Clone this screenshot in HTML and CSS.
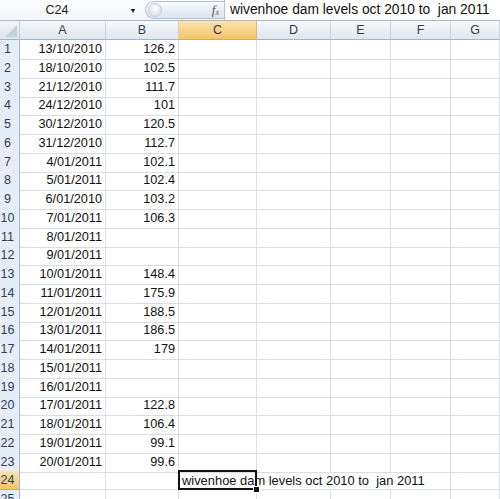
FILE: index.html
```html
<!DOCTYPE html>
<html>
<head>
<meta charset="utf-8">
<link rel="stylesheet" href="styles.css">
</head>
<body>
<div class="sheet">
  <div class="fbar">
    <div class="namebox">C24</div>
    <div class="drop">&#9660;</div>
    <div class="pill"><span class="knob"></span><span class="fx">f<sub>x</sub></span></div>
    <div class="formula">wivenhoe dam levels oct 2010 to&nbsp; jan 2011</div>
  </div>
  <div class="row head">
    <div class="corner"><span class="tri"></span></div>
    <div class="ch">A</div><div class="ch">B</div><div class="ch sel">C</div><div class="ch">D</div><div class="ch">E</div><div class="ch">F</div><div class="ch">G</div>
  </div>
  <div class="row"><div class="rh">1</div><div class="c">13/10/2010</div><div class="c">126.2</div><div class="c"></div><div class="c"></div><div class="c"></div><div class="c"></div><div class="c"></div></div>
  <div class="row"><div class="rh">2</div><div class="c">18/10/2010</div><div class="c">102.5</div><div class="c"></div><div class="c"></div><div class="c"></div><div class="c"></div><div class="c"></div></div>
  <div class="row"><div class="rh">3</div><div class="c">21/12/2010</div><div class="c">111.7</div><div class="c"></div><div class="c"></div><div class="c"></div><div class="c"></div><div class="c"></div></div>
  <div class="row"><div class="rh">4</div><div class="c">24/12/2010</div><div class="c">101</div><div class="c"></div><div class="c"></div><div class="c"></div><div class="c"></div><div class="c"></div></div>
  <div class="row"><div class="rh">5</div><div class="c">30/12/2010</div><div class="c">120.5</div><div class="c"></div><div class="c"></div><div class="c"></div><div class="c"></div><div class="c"></div></div>
  <div class="row"><div class="rh">6</div><div class="c">31/12/2010</div><div class="c">112.7</div><div class="c"></div><div class="c"></div><div class="c"></div><div class="c"></div><div class="c"></div></div>
  <div class="row"><div class="rh">7</div><div class="c">4/01/2011</div><div class="c">102.1</div><div class="c"></div><div class="c"></div><div class="c"></div><div class="c"></div><div class="c"></div></div>
  <div class="row"><div class="rh">8</div><div class="c">5/01/2011</div><div class="c">102.4</div><div class="c"></div><div class="c"></div><div class="c"></div><div class="c"></div><div class="c"></div></div>
  <div class="row"><div class="rh">9</div><div class="c">6/01/2010</div><div class="c">103.2</div><div class="c"></div><div class="c"></div><div class="c"></div><div class="c"></div><div class="c"></div></div>
  <div class="row"><div class="rh">10</div><div class="c">7/01/2011</div><div class="c">106.3</div><div class="c"></div><div class="c"></div><div class="c"></div><div class="c"></div><div class="c"></div></div>
  <div class="row"><div class="rh">11</div><div class="c">8/01/2011</div><div class="c"></div><div class="c"></div><div class="c"></div><div class="c"></div><div class="c"></div><div class="c"></div></div>
  <div class="row"><div class="rh">12</div><div class="c">9/01/2011</div><div class="c"></div><div class="c"></div><div class="c"></div><div class="c"></div><div class="c"></div><div class="c"></div></div>
  <div class="row"><div class="rh">13</div><div class="c">10/01/2011</div><div class="c">148.4</div><div class="c"></div><div class="c"></div><div class="c"></div><div class="c"></div><div class="c"></div></div>
  <div class="row"><div class="rh">14</div><div class="c">11/01/2011</div><div class="c">175.9</div><div class="c"></div><div class="c"></div><div class="c"></div><div class="c"></div><div class="c"></div></div>
  <div class="row"><div class="rh">15</div><div class="c">12/01/2011</div><div class="c">188.5</div><div class="c"></div><div class="c"></div><div class="c"></div><div class="c"></div><div class="c"></div></div>
  <div class="row"><div class="rh">16</div><div class="c">13/01/2011</div><div class="c">186.5</div><div class="c"></div><div class="c"></div><div class="c"></div><div class="c"></div><div class="c"></div></div>
  <div class="row"><div class="rh">17</div><div class="c">14/01/2011</div><div class="c">179</div><div class="c"></div><div class="c"></div><div class="c"></div><div class="c"></div><div class="c"></div></div>
  <div class="row"><div class="rh">18</div><div class="c">15/01/2011</div><div class="c"></div><div class="c"></div><div class="c"></div><div class="c"></div><div class="c"></div><div class="c"></div></div>
  <div class="row"><div class="rh">19</div><div class="c">16/01/2011</div><div class="c"></div><div class="c"></div><div class="c"></div><div class="c"></div><div class="c"></div><div class="c"></div></div>
  <div class="row"><div class="rh">20</div><div class="c">17/01/2011</div><div class="c">122.8</div><div class="c"></div><div class="c"></div><div class="c"></div><div class="c"></div><div class="c"></div></div>
  <div class="row"><div class="rh">21</div><div class="c">18/01/2011</div><div class="c">106.4</div><div class="c"></div><div class="c"></div><div class="c"></div><div class="c"></div><div class="c"></div></div>
  <div class="row"><div class="rh">22</div><div class="c">19/01/2011</div><div class="c">99.1</div><div class="c"></div><div class="c"></div><div class="c"></div><div class="c"></div><div class="c"></div></div>
  <div class="row"><div class="rh">23</div><div class="c">20/01/2011</div><div class="c">99.6</div><div class="c"></div><div class="c"></div><div class="c"></div><div class="c"></div><div class="c"></div></div>
  <div class="row"><div class="rh sel">24</div><div class="c"></div><div class="c nb"></div><div class="c active"><span class="txt">wivenhoe dam levels oct 2010 to&nbsp; jan 2011</span><span class="handle"></span></div><div class="c nr"></div><div class="c nr"></div><div class="c"></div><div class="c"></div></div>
  <div class="row"><div class="rh">25</div><div class="c"></div><div class="c"></div><div class="c"></div><div class="c"></div><div class="c"></div><div class="c"></div><div class="c"></div></div>
</div>
</body>
</html>
```
FILE: styles.css
```css
html, body {
  margin: 0;
  padding: 0;
  background: #ffffff;
}
.sheet {
  width: 500px;
  height: 499px;
  overflow: hidden;
  font-family: "Liberation Sans", Arial, sans-serif;
  font-size: 12.5px;
  color: #111;
}
.fbar {
  height: 20px;
  display: flex;
  align-items: center;
  background: linear-gradient(#fdfdfe, #f2f5f9);
  border-bottom: 1px solid #a9b8cc;
}
.namebox {
  width: 114px;
  text-align: center;
  font-size: 12.5px;
  color: #222;
}
.drop {
  width: 16px;
  margin-left: 11px;
  font-size: 7px;
  color: #111;
  text-align: center;
}
.pill {
  margin-left: 4px;
  width: 79px;
  height: 18px;
  border: 1px solid #b3c0d2;
  border-right: none;
  border-radius: 9px 0 0 9px;
  background: linear-gradient(#f8fafc, #dbe3ee);
  display: flex;
  align-items: center;
  justify-content: space-between;
  box-sizing: border-box;
}
.knob {
  width: 14px;
  height: 14px;
  border-radius: 50%;
  margin-left: 2px;
  background: radial-gradient(circle at 50% 35%, #ffffff, #cfd8e4);
  border: 1px solid #c3cedd;
  box-sizing: border-box;
}
.fx {
  font-family: "Liberation Serif", serif;
  font-style: italic;
  font-size: 13px;
  color: #555;
  margin-right: 5px;
  line-height: 1;
}
.fx sub {
  font-size: 8px;
  vertical-align: -1px;
}
.formula {
  flex: 1;
  height: 20px;
  line-height: 20px;
  border-left: 1px solid #b3c0d2;
  padding-left: 5px;
  background: #fff;
  white-space: nowrap;
  font-size: 13.8px;
  color: #111;
}
.row {
  display: grid;
  grid-template-columns: 20px 86px 73px 78px 74px 60px 60px 49px;
  height: 18.75px;
}
.row.head {
  height: 19px;
}
.corner {
  background: linear-gradient(#f4f6f9, #dde3ea);
  border-right: 1px solid #c4ccd8;
  border-bottom: 1px solid #9eb6ce;
  position: relative;
}
.tri {
  position: absolute;
  right: 2px;
  bottom: 2px;
  width: 0;
  height: 0;
  border-left: 12px solid transparent;
  border-bottom: 12px solid #c6cfdb;
}
.ch {
  background: linear-gradient(#f7f9fb, #e1e6ed);
  border-right: 1px solid #c9d1dc;
  border-bottom: 1px solid #9eb6ce;
  text-align: center;
  line-height: 18px;
  color: #333c47;
  font-size: 12.5px;
}
.ch.sel {
  background: linear-gradient(#fbe2ae, #f2c56a);
  border-right-color: #e5b565;
  border-bottom-color: #e3a848;
}
.rh {
  background: #e7edf6;
  border-right: 1px solid #9eb6ce;
  border-bottom: 1px solid #c5d2e3;
  color: #27415f;
  font-size: 12.5px;
  line-height: 18px;
  padding-right: 4px;
  text-align: center;
}
.rh.sel {
  background: linear-gradient(#fbe2ae, #f2c56a);
  border-bottom-color: #e3a848;
}
.c {
  border-right: 1px solid #d8dee7;
  border-bottom: 1px solid #d8dee7;
  text-align: right;
  padding-right: 3px;
  line-height: 19px;
  font-size: 12.7px;
  white-space: nowrap;
  color: #111;
}
.c.nr {
  border-right-color: transparent;
}
.c.active {
  position: relative;
  text-align: left;
  padding: 0;
  overflow: visible;
  z-index: 2;
}
.c.active::before {
  content: "";
  position: absolute;
  left: -1px;
  top: -1px;
  right: -1px;
  bottom: -1px;
  border: 2px solid #111;
  pointer-events: none;
}
.txt {
  position: absolute;
  left: 3px;
  top: 0;
  line-height: 19px;
  font-size: 12.9px;
  white-space: nowrap;
}
.handle {
  position: absolute;
  right: -4px;
  bottom: -4px;
  width: 5px;
  height: 5px;
  background: #111;
  border: 1px solid #fff;
}
```
